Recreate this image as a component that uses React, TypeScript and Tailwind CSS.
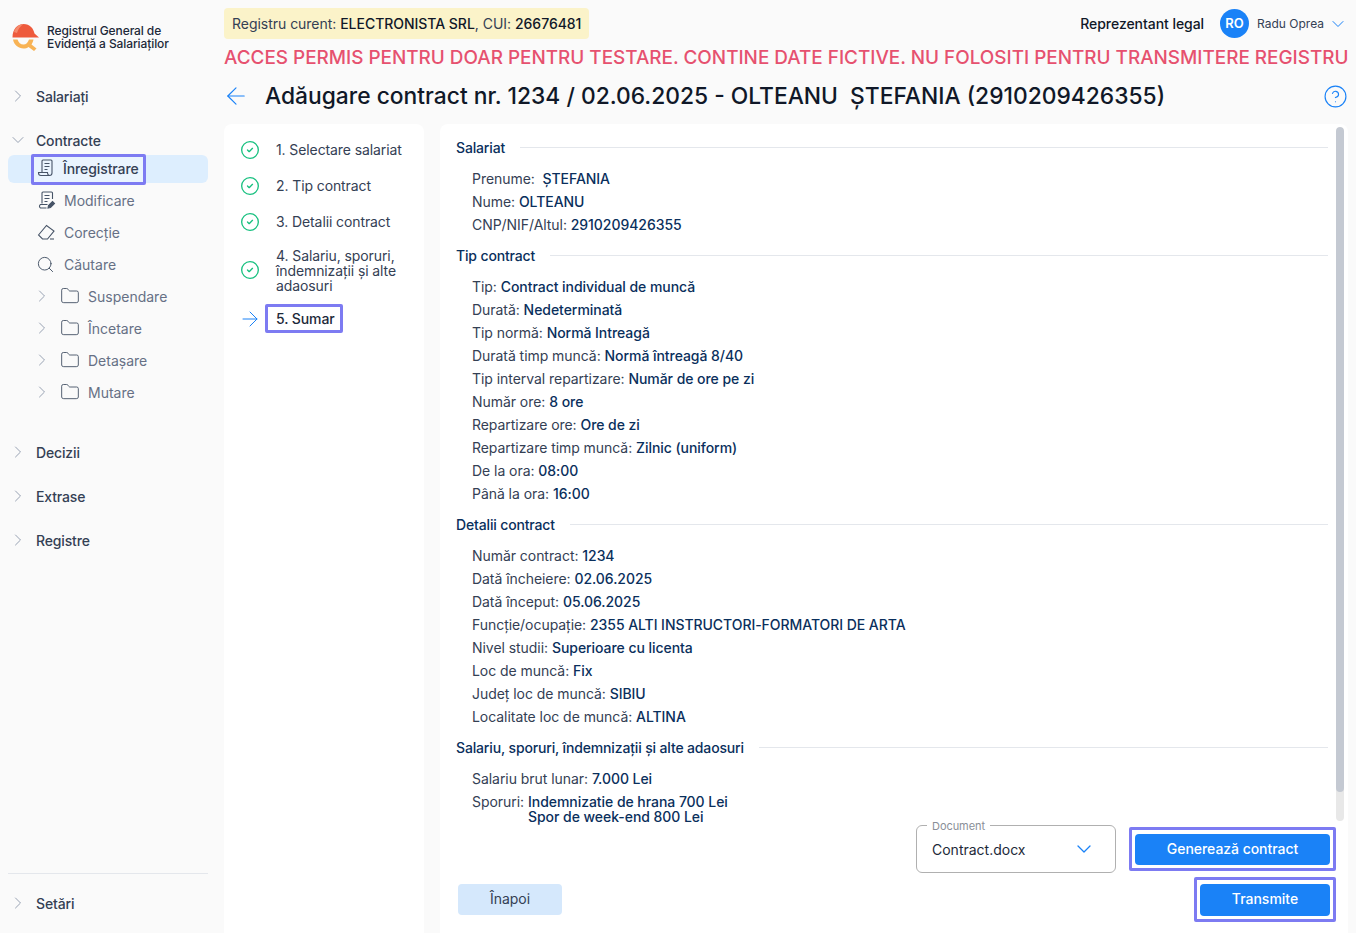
import type { ReactNode } from "react";
import { ArrowLeft, ArrowRight, ChevronDown, ChevronRight, CircleCheck, CircleHelp, Folder, Search } from "lucide-react";

const font = { fontFamily: "Inter, 'Noto Sans', sans-serif" };

function Logo() {
  return (
    <svg width="28" height="30" viewBox="0 0 28 30" className="shrink-0">
      <path d="M0.5 15.5C0.5 7 5.5 2 11.5 2C18 2 21.5 6.5 22.5 11.5L27 15.5Z" fill="#ee5a3c" />
      <path d="M2 10C3.5 5 7 2.5 11.5 2C8.5 4 6 7 5 11Z" fill="#f58a6c" />
      <path d="M1 17.5C2 23 6.5 26.5 11.5 26.5C13.5 26.5 15 26 16.5 25L22 29L24.5 26.5L19.5 22.5C20.5 21 21 19.5 21.5 17.5H17C16 20.5 14 22.5 11.5 22.5C8.5 22.5 6.5 20.5 5.5 17.5Z" fill="#f8b355" />
    </svg>
  );
}

function DocIcon({ pen }: { pen?: boolean }) {
  return (
    <svg width="20" height="20" viewBox="0 0 20 20" fill="none" stroke="#475467" strokeWidth="1.1" className="shrink-0">
      <path d="M8.5 5.5H13.5M8.5 8.5H13.5M8.5 11.5H11.5" />
      {pen ? (
        <>
          <path d="M6 13.5V3a1 1 0 0 1 1-1h8.5a1 1 0 0 1 1 1v6" />
          <path d="M11.5 14.5H4.5a2 2 0 0 0 0 3.5H10.5" />
          <path d="M12 18L12.5 15.5L16.5 11.5L18.5 13.5L14.5 17.5Z" fill="#475467" />
        </>
      ) : (
        <path d="M6 14V3a1 1 0 0 1 1-1h8a1 1 0 0 1 1 1v12a2.5 2.5 0 0 1-2.5 2.5H5a2.5 2.5 0 0 1-2.5-2.5V14.5H11.5V15a2.5 2.5 0 0 0 2 2.5" />
      )}
    </svg>
  );
}

function EraserIcon() {
  return (
    <svg width="20" height="20" viewBox="0 0 20 20" fill="none" stroke="#475467" strokeWidth="1.1" className="shrink-0">
      <path d="M2.5 13L10.5 3.5L18 9L11.5 17H6.5Z" />
      <path d="M14 17H18" />
    </svg>
  );
}

function TopItem({ label, open }: { label: string; open?: boolean }) {
  return (
    <div className="flex h-5 items-center text-[14px] font-medium tracking-[-0.15px] text-[#344054]">
      <span className="flex w-7 shrink-0">
        {open ? (
          <ChevronDown size={20} strokeWidth={1.2} className="text-[#98a2b3]" />
        ) : (
          <ChevronRight size={20} strokeWidth={1.2} className="text-[#98a2b3]" />
        )}
      </span>
      {label}
    </div>
  );
}

function SubItem({ icon, label }: { icon: ReactNode; label: string }) {
  return (
    <div className="flex h-8 items-center gap-2 pl-7 text-[14px] text-[#667085]">
      {icon}
      {label}
    </div>
  );
}

function FolderItem({ label }: { label: string }) {
  return (
    <div className="flex h-8 items-center pl-6 text-[14px] text-[#667085]">
      <ChevronRight size={20} strokeWidth={1.2} className="shrink-0 text-[#98a2b3]" />
      <Folder size={20} strokeWidth={1.1} className="mx-2 shrink-0 text-[#475467]" />
      {label}
    </div>
  );
}

function Sidebar() {
  return (
    <aside className="flex h-[933px] w-[224px] shrink-0 flex-col pr-4 pl-2">
      <div className="flex h-[73px] items-end gap-[7px] pb-[21px] pl-1">
        <Logo />
        <div className="pb-[2px] text-[12px] leading-[13px] font-medium tracking-[-0.1px] text-[#1d2939]">
          <div>Registrul General de</div>
          <div>Evidență a Salariaților</div>
        </div>
      </div>
      <div className="mt-[13px]">
        <TopItem label="Salariați" />
      </div>
      <div className="mt-6">
        <TopItem label="Contracte" open />
      </div>
      <div className="mt-[5px] flex h-7 items-center rounded-md bg-[#ddeefe] pl-[23px]">
        <div className="flex h-[31px] w-[115px] items-center gap-[7px] rounded-[2px] border-[3px] border-[#7d7bf2] bg-[#eaf4fe] pb-[2px] pl-[2px] text-[14px] font-medium tracking-[-0.1px] text-[#344054]">
          <DocIcon />
          Înregistrare
        </div>
      </div>
      <div className="mt-[1px]">
        <SubItem icon={<DocIcon pen />} label="Modificare" />
        <SubItem icon={<EraserIcon />} label="Corecție" />
        <SubItem icon={<Search size={19} strokeWidth={1.2} className="mr-[1px] shrink-0 text-[#475467]" />} label="Căutare" />
        <FolderItem label="Suspendare" />
        <FolderItem label="Încetare" />
        <FolderItem label="Detașare" />
        <FolderItem label="Mutare" />
      </div>
      <div className="mt-[34px] flex flex-col gap-6">
        <TopItem label="Decizii" />
        <TopItem label="Extrase" />
        <TopItem label="Registre" />
      </div>
      <div className="mt-auto border-t border-[#e4e7ec] pt-[19px] pb-5">
        <TopItem label="Setări" />
      </div>
    </aside>
  );
}

function Step({ children, multi }: { children: ReactNode; multi?: boolean }) {
  return (
    <div className={multi ? "flex items-start" : "flex items-center"}>
      <CircleCheck size={20} strokeWidth={1.6} className={multi ? "mt-3 mr-4 shrink-0 text-[#17c07f]" : "mr-4 shrink-0 text-[#17c07f]"} />
      <div className={multi ? "text-[14px] leading-[15px] tracking-[-0.1px] text-[#344054]" : "pb-[1px] text-[14px] leading-[15px] tracking-[-0.1px] text-[#344054]"}>
        {children}
      </div>
    </div>
  );
}

function Steps() {
  return (
    <div className="flex w-[200px] shrink-0 flex-col rounded-t-lg bg-white px-4 pt-4">
      <div className="flex flex-col gap-4">
        <Step>1. Selectare salariat</Step>
        <Step>2. Tip contract</Step>
        <Step>3. Detalii contract</Step>
        <Step multi>
          4. Salariu, sporuri,
          <br />
          îndemnizații și alte
          <br />
          adaosuri
        </Step>
      </div>
      <div className="mt-[11px] flex items-center">
        <ArrowRight size={24} strokeWidth={1} className="mr-[3px] -ml-[2px] shrink-0 text-[#1a82f7]" />
        <div className="flex h-[29px] w-[78px] items-center rounded-[2px] border-[3px] border-[#7d7bf2] pl-2 text-[14px] font-medium tracking-[-0.1px] text-[#1d2939]">
          5. Sumar
        </div>
      </div>
    </div>
  );
}

function Section({ title, children }: { title: string; children: ReactNode }) {
  return (
    <section>
      <div className="flex h-5 items-center gap-[15px] text-[14px] font-medium tracking-[-0.15px] text-[#0a2f5c]">
        <span className="shrink-0">{title}</span>
        <span className="h-px grow bg-[#e4e7ec]" />
      </div>
      <div className="mt-[10px] flex flex-col pl-4">{children}</div>
    </section>
  );
}

function Line({ label, value }: { label: string; value: string }) {
  return (
    <div className="h-[23px] text-[14px] leading-[23px] tracking-[-0.05px] whitespace-pre text-[#344054]">
      {label} <span className="font-medium text-[#0a2f5c]">{value}</span>
    </div>
  );
}

const tipContract = [
  ["Tip:", "Contract individual de muncă"],
  ["Durată:", "Nedeterminată"],
  ["Tip normă:", "Normă Intreagă"],
  ["Durată timp muncă:", "Normă întreagă 8/40"],
  ["Tip interval repartizare:", "Număr de ore pe zi"],
  ["Număr ore:", "8 ore"],
  ["Repartizare ore:", "Ore de zi"],
  ["Repartizare timp muncă:", "Zilnic (uniform)"],
  ["De la ora:", "08:00"],
  ["Până la ora:", "16:00"],
];

const detalii = [
  ["Număr contract:", "1234"],
  ["Dată încheiere:", "02.06.2025"],
  ["Dată început:", "05.06.2025"],
  ["Funcție/ocupație:", "2355 ALTI INSTRUCTORI-FORMATORI DE ARTA"],
  ["Nivel studii:", "Superioare cu licenta"],
  ["Loc de muncă:", "Fix"],
  ["Județ loc de muncă:", "SIBIU"],
  ["Localitate loc de muncă:", "ALTINA"],
];

function Summary() {
  return (
    <div className="flex h-[809px] min-w-0 grow flex-col rounded-t-lg bg-white">
      <div className="flex h-[701px] shrink-0 pt-[3px] pr-1">
        <div className="flex min-w-0 grow flex-col gap-[9px] pt-[10px] pr-2 pl-4">
          <Section title="Salariat">
            <Line label="Prenume: " value="ȘTEFANIA" />
            <Line label="Nume:" value="OLTEANU" />
            <Line label="CNP/NIF/Altul:" value="2910209426355" />
          </Section>
          <Section title="Tip contract">
            {tipContract.map(([l, v]) => (
              <Line key={l} label={l} value={v} />
            ))}
          </Section>
          <Section title="Detalii contract">
            {detalii.map(([l, v]) => (
              <Line key={l} label={l} value={v} />
            ))}
          </Section>
          <Section title="Salariu, sporuri, îndemnizații și alte adaosuri">
            <Line label="Salariu brut lunar:" value="7.000 Lei" />
            <div className="mt-1 flex text-[14px] leading-[15px] tracking-[-0.05px] text-[#344054]">
              <span className="mr-1">Sporuri:</span>
              <span className="font-medium text-[#0a2f5c]">
                Indemnizatie de hrana 700 Lei
                <br />
                Spor de week-end 800 Lei
              </span>
            </div>
          </Section>
        </div>
        <div className="h-[694px] w-2 shrink-0 overflow-hidden rounded bg-[#e8e8e8]">
          <div className="h-[665px] rounded bg-[#c4c9d2]" />
        </div>
      </div>
      <div className="flex grow items-start justify-between pr-3 pl-[18px]">
        <button className="mt-[59px] h-[31px] w-[104px] rounded bg-[#d5e8fc] pb-[2px] text-[14px] text-[#344054]">Înapoi</button>
        <div className="flex flex-col items-end gap-1">
          <div className="flex items-start gap-[13px]">
            <div className="relative flex h-[48px] w-[200px] items-center justify-between rounded-md border border-[#b0b0b0] pr-[19px] pl-[15px] text-[14px] text-[#1d2939]">
              <span className="absolute -top-[6px] left-[10px] bg-white px-[5px] text-[11px] leading-[13px] tracking-[-0.05px] text-[#8a8f98]">Document</span>
              Contract.docx
              <ChevronDown size={24} strokeWidth={1.3} className="text-[#1a82f7]" />
            </div>
            <div className="mt-[2px] flex h-[44px] w-[207px] items-center justify-center rounded-[2px] border-[3px] border-[#7d7bf2]">
              <button className="h-[31px] w-[195px] rounded bg-[#1a82f7] pb-[2px] text-[14px] font-medium tracking-[-0.05px] text-white">Generează contract</button>
            </div>
          </div>
          <div className="flex h-[45px] w-[142px] items-center justify-center rounded-[2px] border-[3px] border-[#7d7bf2]">
            <button className="h-[32px] w-[130px] rounded bg-[#1a82f7] pb-[2px] text-[14px] font-medium text-white">Transmite</button>
          </div>
        </div>
      </div>
    </div>
  );
}

export default function App() {
  return (
    <div style={font} className="flex h-[933px] w-[1356px] overflow-hidden bg-[#fafafa]">
      <Sidebar />
      <main className="flex min-w-0 grow flex-col pr-2">
        <div className="flex h-[47px] items-start justify-between pt-2">
          <div className="flex h-[31px] items-center rounded bg-[#fbf3c9] px-2 text-[14px] tracking-[-0.03px] text-[#344054]">
            Registru curent:&nbsp;<span className="font-medium text-[#101828]">ELECTRONISTA SRL</span>, CUI:&nbsp;
            <span className="font-medium text-[#101828]">26676481</span>
          </div>
          <div className="flex h-[31px] items-center">
            <span className="text-[14px] font-medium tracking-[-0.05px] text-[#101828]">Reprezentant legal</span>
            <span className="ml-4 flex size-[29px] items-center justify-center rounded-full bg-[#1a82f7] text-[13px] font-semibold text-white">RO</span>
            <span className="ml-2 text-[12px] text-[#344054]">Radu Oprea</span>
            <ChevronDown size={20} strokeWidth={1.2} className="ml-1 text-[#1a82f7]" />
          </div>
        </div>
        <div className="h-[21px] text-[18.9px] leading-[21px] font-medium whitespace-nowrap text-[#e6516f]">
          ACCES PERMIS PENTRU DOAR PENTRU TESTARE. CONTINE DATE FICTIVE. NU FOLOSITI PENTRU TRANSMITERE REGISTRU
        </div>
        <div className="flex h-[56px] items-center">
          <ArrowLeft size={28} strokeWidth={1} className="-ml-[2px] shrink-0 text-[#1a82f7]" />
          <h1 className="ml-[15px] text-[22.8px] font-medium whitespace-pre text-[#101828]">Adăugare contract nr. 1234 / 02.06.2025 - OLTEANU  ȘTEFANIA (2910209426355)</h1>
          <CircleHelp size={25} strokeWidth={1.1} className="ml-auto shrink-0 text-[#1a82f7]" />
        </div>
        <div className="flex gap-4">
          <Steps />
          <Summary />
        </div>
      </main>
    </div>
  );
}
